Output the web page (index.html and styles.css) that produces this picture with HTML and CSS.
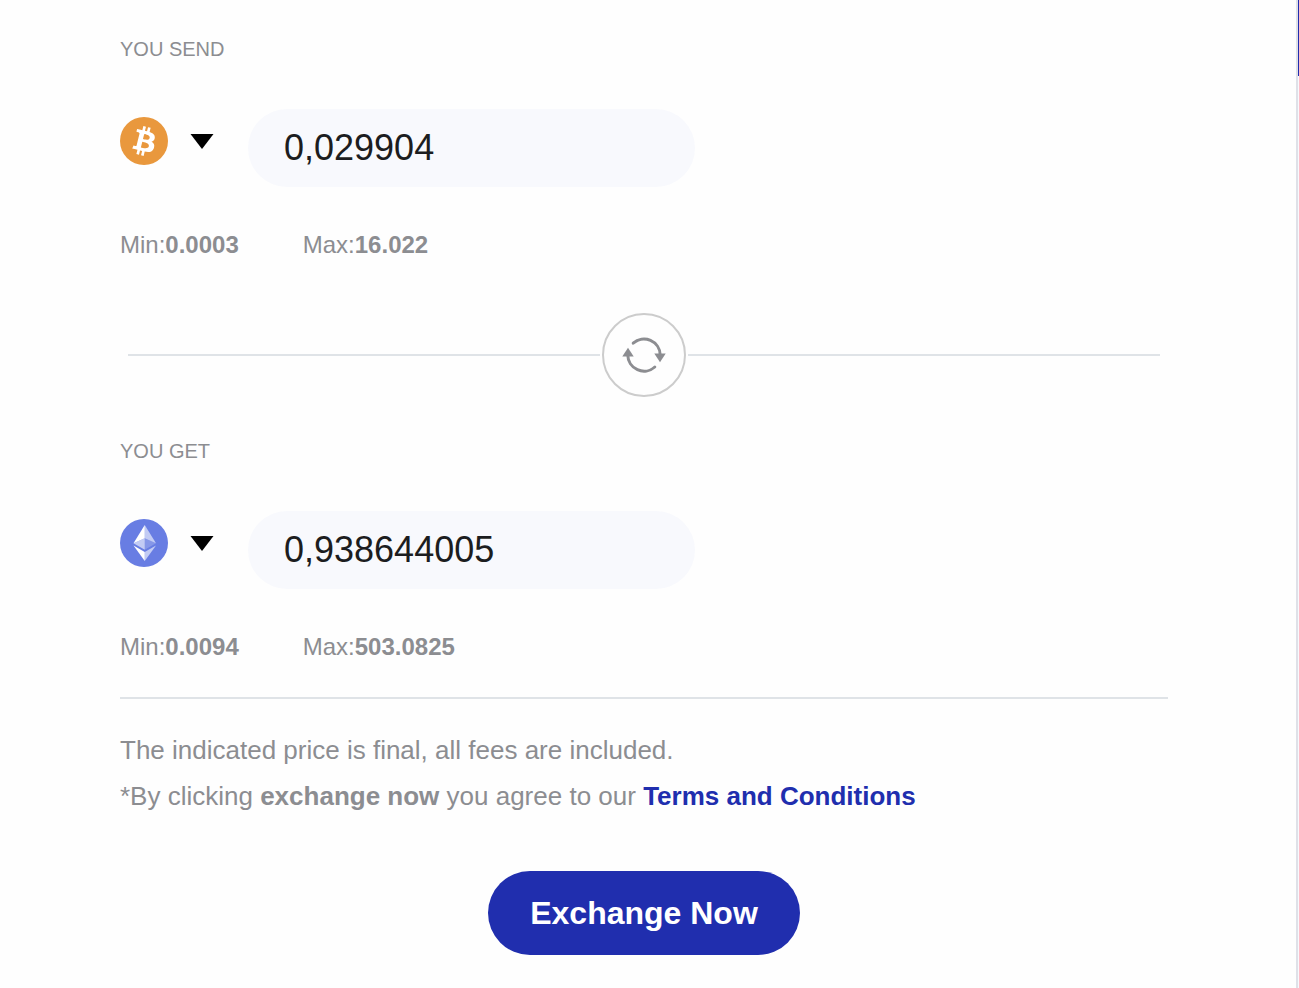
FILE: index.html
```html
<!DOCTYPE html>
<html lang="en">
<head>
<meta charset="utf-8">
<title>Exchange</title>
<link rel="stylesheet" href="styles.css">
</head>
<body class="page">
<main class="panel">
  <form class="exchange">
    <section class="field">
      <label class="field-label" for="send">YOU SEND</label>
      <div class="field-row">
        <button class="coin" type="button" aria-label="Choose currency to send: Bitcoin" aria-haspopup="listbox">
          <svg class="coin-icon" viewBox="0 0 32 32" aria-hidden="true">
            <circle cx="16" cy="16" r="16" fill="#e9983d"/>
            <path fill="#fff" d="M23.189 14.02c.314-2.096-1.283-3.223-3.465-3.975l.708-2.84-1.728-.43-.69 2.765c-.454-.114-.92-.22-1.385-.326l.695-2.783L15.596 6l-.708 2.839c-.376-.086-.746-.17-1.104-.26l.002-.009-2.384-.595-.46 1.846s1.283.294 1.256.312c.7.175.826.638.805 1.006l-.806 3.235c.048.012.11.03.18.057l-.183-.045-1.13 4.532c-.086.212-.303.531-.793.41.018.025-1.256-.313-1.256-.313l-.858 1.978 2.25.561c.418.105.828.215 1.231.318l-.715 2.872 1.727.43.708-2.84c.472.127.93.245 1.378.357l-.706 2.828 1.728.43.715-2.866c2.948.558 5.164.333 6.097-2.333.752-2.146-.037-3.385-1.588-4.192 1.13-.26 1.98-1.003 2.207-2.538zm-3.95 5.538c-.533 2.147-4.148.986-5.32.695l.95-3.805c1.172.293 4.929.872 4.37 3.11zm.535-5.569c-.487 1.953-3.495.96-4.47.717l.86-3.45c.975.243 4.118.696 3.61 2.733z"/>
          </svg>
          <svg class="caret" viewBox="0 0 24 16" aria-hidden="true"><path d="M.5 1h23L12 16z"/></svg>
        </button>
        <input class="amount" id="send" type="text" inputmode="decimal" value="0,029904">
      </div>
      <div class="limits">
        <span>Min:<b>0.0003</b></span>
        <span>Max:<b>16.022</b></span>
      </div>
    </section>

    <div class="divider">
      <button class="swap" type="button" aria-label="Swap currencies">
        <svg class="swap-icon" viewBox="0 0 48 48" aria-hidden="true">
          <path class="swap-arc" d="M13.2 12.2A16.2 16.2 0 0 1 40.2 24"/>
          <path class="swap-arc" d="M34.8 36A16.2 16.2 0 0 1 7.8 24"/>
          <path class="swap-head" d="M34.3 22.5h11.4L40 31.3z"/>
          <path class="swap-head" d="M2.3 25.5h11.4L8 16.7z"/>
        </svg>
      </button>
    </div>

    <section class="field">
      <label class="field-label" for="get">YOU GET</label>
      <div class="field-row">
        <button class="coin" type="button" aria-label="Choose currency to get: Ethereum" aria-haspopup="listbox">
          <svg class="coin-icon" viewBox="0 0 32 32" aria-hidden="true">
            <circle cx="16" cy="16" r="16" fill="#687de3"/>
            <g fill="#fff">
              <path fill-opacity=".6" d="M16.498 4v8.87l7.497 3.35z"/>
              <path d="M16.498 4L9 16.22l7.498-3.35z"/>
              <path fill-opacity=".6" d="M16.498 21.968v6.027L24 17.616z"/>
              <path d="M16.498 27.995v-6.028L9 17.616z"/>
              <path fill-opacity=".2" d="M16.498 20.573l7.497-4.353-7.497-3.348z"/>
              <path fill-opacity=".6" d="M9 16.22l7.498 4.353v-7.701z"/>
            </g>
          </svg>
          <svg class="caret" viewBox="0 0 24 16" aria-hidden="true"><path d="M.5 1h23L12 16z"/></svg>
        </button>
        <input class="amount" id="get" type="text" inputmode="decimal" value="0,938644005">
      </div>
      <div class="limits">
        <span>Min:<b>0.0094</b></span>
        <span>Max:<b>503.0825</b></span>
      </div>
    </section>

    <div class="notes">
      <p class="note">The indicated price is final, all fees are included.</p>
      <p class="note">*By clicking <b>exchange now</b> you agree to our <a class="terms" href="#">Terms and Conditions</a></p>
    </div>

    <button class="submit" type="submit">Exchange Now</button>
  </form>
</main>
<aside class="edge"><div class="edge-header"></div></aside>
</body>
</html>
```

FILE: styles.css
```css
* {
  box-sizing: border-box;
}

.page {
  display: flex;
  min-height: 100vh;
  margin: 0;
  background: #fefefe;
  color: #8c8d91;
  font-family: "Liberation Sans", Arial, sans-serif;
}

.panel {
  flex: 1;
  padding: 37px 128px 33px 120px;
  border-right: 2px solid #dfe1e8;
}

.exchange {
  display: flex;
  flex-direction: column;
}

.field {
  display: flex;
  flex-direction: column;
}

.field-label {
  font-size: 20px;
  line-height: 24px;
}

.field-row {
  display: flex;
  align-items: flex-start;
  margin-top: 48px;
}

.coin {
  display: flex;
  align-items: center;
  gap: 22px;
  width: 128px;
  height: 64px;
  padding: 0;
  border: 0;
  background: none;
  cursor: pointer;
}

.coin-icon {
  width: 48px;
  height: 48px;
}

.caret {
  width: 24px;
  height: 16px;
}

.amount {
  width: 447px;
  height: 78px;
  padding: 0 36px;
  border: 0;
  border-radius: 39px;
  background: #f8f9fd;
  color: #1c1d20;
  font-family: inherit;
  font-size: 36px;
}

.limits {
  display: flex;
  gap: 64px;
  margin-top: 44px;
  font-size: 24px;
  line-height: 28px;
}

.divider {
  display: flex;
  align-items: center;
  gap: 2px;
  margin: 54px 8px 42px;
}

.divider::before,
.divider::after {
  content: "";
  flex: 1;
  height: 2px;
  background: #dfe3e7;
}

.swap {
  display: flex;
  align-items: center;
  justify-content: center;
  width: 84px;
  height: 84px;
  padding: 0;
  border: 2px solid #cccccc;
  border-radius: 50%;
  background: #fefefe;
  cursor: pointer;
}

.swap-icon {
  width: 48px;
  height: 48px;
}

.swap-arc {
  fill: none;
  stroke: #8c8d91;
  stroke-width: 3;
  stroke-linecap: round;
}

.swap-head {
  fill: #8c8d91;
}

.notes {
  margin-top: 36px;
  padding-top: 28px;
  border-top: 2px solid #dfe3e7;
}

.note {
  margin: 0;
  font-size: 26px;
  line-height: 46px;
}

.terms {
  color: #202eae;
  font-weight: bold;
  text-decoration: none;
}

.submit {
  align-self: center;
  width: 312px;
  height: 84px;
  margin-top: 52px;
  padding: 0;
  border: 0;
  border-radius: 42px;
  background: #202eae;
  color: #fff;
  font-family: inherit;
  font-size: 32px;
  font-weight: bold;
  cursor: pointer;
}

.edge {
  width: 1px;
  background: #f8f9fd;
}

.edge-header {
  height: 76px;
  background: #202eae;
}
```
